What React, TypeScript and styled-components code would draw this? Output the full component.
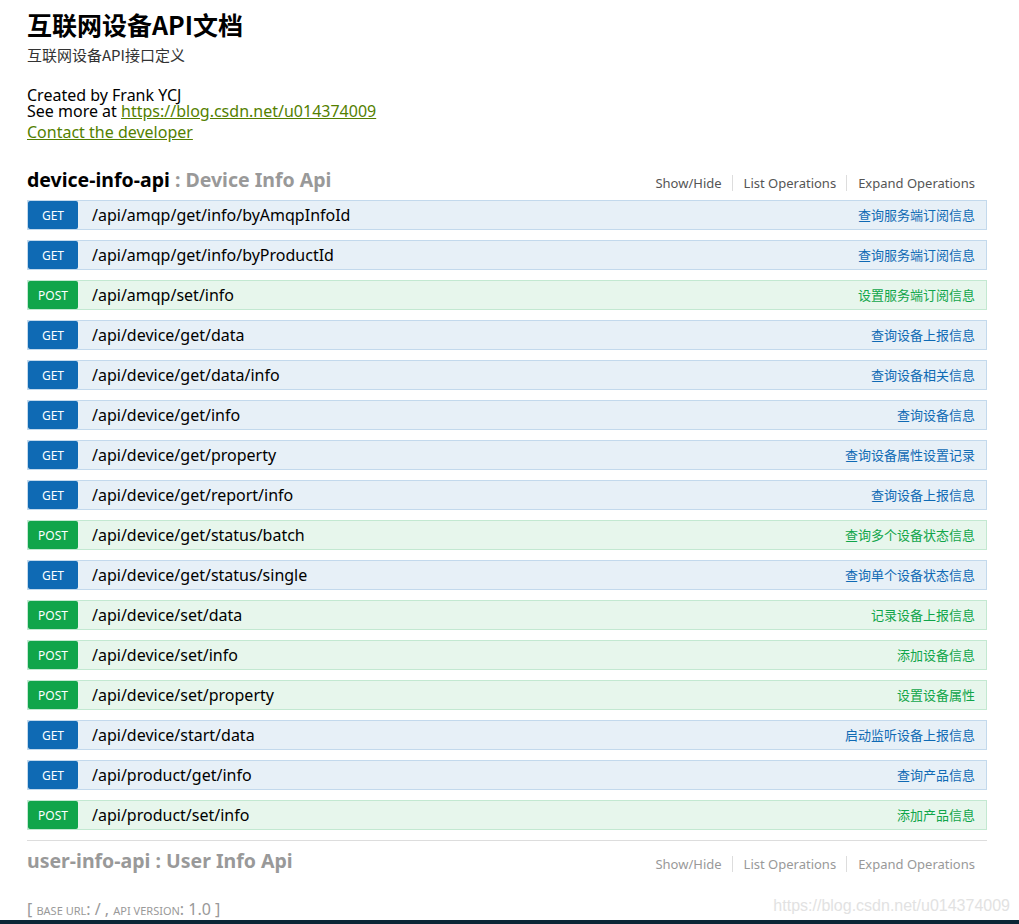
import React from "react";
import styled, { createGlobalStyle } from "styled-components";

const Global = createGlobalStyle`
  html, body { margin: 0; padding: 0; background: #fff; }
  body {
    font-family: "Noto Sans", "Noto Sans CJK SC", sans-serif;
    color: #000;
  }
`;

const Page = styled.div`
  position: relative;
  width: 1019px;
  height: 924px;
  overflow: hidden;
  display: flex;
  flex-direction: column;
`;

const Content = styled.div`
  padding: 7px 0 0 27px;
  width: 960px;
  flex: 1;
`;

const Title = styled.h1`
  margin: 0;
  font-size: 25px;
  font-weight: 700;
  line-height: 34px;
  font-family: "Noto Sans CJK SC", sans-serif;
`;

const Subtitle = styled.div`
  margin-top: 4px;
  font-size: 15px;
  line-height: 20px;
  color: #333;
  font-family: "Noto Sans CJK SC", sans-serif;
`;

const Info = styled.div`
  margin-top: 22px;
  font-size: 16px;
  line-height: 16px;
`;

const InfoLine = styled.div`
  line-height: 16px;
`;

const Link = styled.a`
  color: #547f00;
  text-decoration: underline;
`;

const ContactLine = styled.div`
  margin-top: 4px;
  line-height: 18px;
`;

const Resource = styled.div<{ $muted?: boolean }>`
  margin-top: ${(p) => (p.$muted ? "10px" : "25px")};
  ${(p) => (p.$muted ? "border-top: 1px solid #ddd; padding-top: 6px;" : "")}
`;

const Heading = styled.div`
  display: flex;
  align-items: center;
  justify-content: space-between;
  height: 28px;
  margin-bottom: 6px;
`;

const HeadTitle = styled.h2<{ $muted?: boolean }>`
  margin: 0;
  font-size: 19.5px;
  font-weight: 700;
  color: ${(p) => (p.$muted ? "#999" : "#000")};
  line-height: 28px;
`;

const HeadDesc = styled.span`
  color: #999;
`;

const Options = styled.ul`
  list-style: none;
  margin: 6px 0 0;
  padding: 0 12px 0 0;
  display: flex;
  align-items: center;
`;

const Option = styled.li<{ $muted?: boolean; $first?: boolean }>`
  font-size: 13px;
  color: ${(p) => (p.$muted ? "#999" : "#555")};
  padding: 0 10px 0 11px;
  line-height: 16px;
  border-left: ${(p) => (p.$first ? "none" : "1px solid #ddd")};
  &:last-child { padding-right: 0; }
`;

const Ops = styled.div`
  display: flex;
  flex-direction: column;
  gap: 10px;
`;

const Op = styled.div<{ $post?: boolean }>`
  display: flex;
  align-items: center;
  height: 28px;
  border: 1px solid ${(p) => (p.$post ? "#c3e8d1" : "#c3d9ec")};
  background: ${(p) => (p.$post ? "#e7f6ec" : "#e7f0f7")};
`;

const Badge = styled.span<{ $post?: boolean }>`
  width: 50px;
  height: 28px;
  border-radius: 2px;
  background: ${(p) => (p.$post ? "#10a54a" : "#0f6ab4")};
  color: #fff;
  font-size: 12px;
  display: flex;
  align-items: center;
  justify-content: center;
  flex-shrink: 0;
`;

const Path = styled.span`
  margin-left: 14px;
  font-size: 16px;
  color: #000;
  flex: 1;
`;

const Summary = styled.span<{ $post?: boolean }>`
  font-size: 13px;
  color: ${(p) => (p.$post ? "#10a54a" : "#0f6ab4")};
  margin: 0 11px 1px 0;
  font-family: "Noto Sans CJK SC", sans-serif;
`;

const Footer = styled.div`
  margin-top: 25px;
  font-size: 16px;
  color: #999;
  line-height: 18px;
`;

const Small = styled.span`
  font-size: 11px;
  text-transform: uppercase;
`;

const BottomBar = styled.div`
  height: 5px;
  background: #0b2535;
  flex-shrink: 0;
`;

const Watermark = styled.div`
  position: absolute;
  right: 9px;
  bottom: 9px;
  font-family: "Liberation Sans", Arial, sans-serif;
  font-size: 16px;
  color: #e2e2e2;
`;

type Row = { m: "GET" | "POST"; p: string; s: string };
const rows: Row[] = [
  { m: "GET", p: "/api/amqp/get/info/byAmqpInfoId", s: "查询服务端订阅信息" },
  { m: "GET", p: "/api/amqp/get/info/byProductId", s: "查询服务端订阅信息" },
  { m: "POST", p: "/api/amqp/set/info", s: "设置服务端订阅信息" },
  { m: "GET", p: "/api/device/get/data", s: "查询设备上报信息" },
  { m: "GET", p: "/api/device/get/data/info", s: "查询设备相关信息" },
  { m: "GET", p: "/api/device/get/info", s: "查询设备信息" },
  { m: "GET", p: "/api/device/get/property", s: "查询设备属性设置记录" },
  { m: "GET", p: "/api/device/get/report/info", s: "查询设备上报信息" },
  { m: "POST", p: "/api/device/get/status/batch", s: "查询多个设备状态信息" },
  { m: "GET", p: "/api/device/get/status/single", s: "查询单个设备状态信息" },
  { m: "POST", p: "/api/device/set/data", s: "记录设备上报信息" },
  { m: "POST", p: "/api/device/set/info", s: "添加设备信息" },
  { m: "POST", p: "/api/device/set/property", s: "设置设备属性" },
  { m: "GET", p: "/api/device/start/data", s: "启动监听设备上报信息" },
  { m: "GET", p: "/api/product/get/info", s: "查询产品信息" },
  { m: "POST", p: "/api/product/set/info", s: "添加产品信息" },
];

const OptionList = ({ muted }: { muted?: boolean }) => (
  <Options>
    <Option $muted={muted} $first>Show/Hide</Option>
    <Option $muted={muted}>List Operations</Option>
    <Option $muted={muted}>Expand Operations</Option>
  </Options>
);

export default function App() {
  return (
    <Page>
      <Global />
      <Content>
        <Title>互联网设备API文档</Title>
        <Subtitle>互联网设备API接口定义</Subtitle>
        <Info>
          <InfoLine>Created by Frank YCJ</InfoLine>
          <InfoLine>
            See more at <Link href="#">https://blog.csdn.net/u014374009</Link>
          </InfoLine>
          <ContactLine>
            <Link href="#">Contact the developer</Link>
          </ContactLine>
        </Info>
        <Resource>
          <Heading>
            <HeadTitle>
              device-info-api <HeadDesc>: Device Info Api</HeadDesc>
            </HeadTitle>
            <OptionList />
          </Heading>
          <Ops>
            {rows.map((r, i) => {
              const post = r.m === "POST";
              return (
                <Op key={i} $post={post}>
                  <Badge $post={post}>{r.m}</Badge>
                  <Path>{r.p}</Path>
                  <Summary $post={post}>{r.s}</Summary>
                </Op>
              );
            })}
          </Ops>
        </Resource>
        <Resource $muted>
          <Heading>
            <HeadTitle $muted>user-info-api : User Info Api</HeadTitle>
            <OptionList muted />
          </Heading>
        </Resource>
        <Footer>
          [ <Small>base url</Small>: / , <Small>api version</Small>: 1.0 ]
        </Footer>
      </Content>
      <BottomBar />
      <Watermark>https://blog.csdn.net/u014374009</Watermark>
    </Page>
  );
}
